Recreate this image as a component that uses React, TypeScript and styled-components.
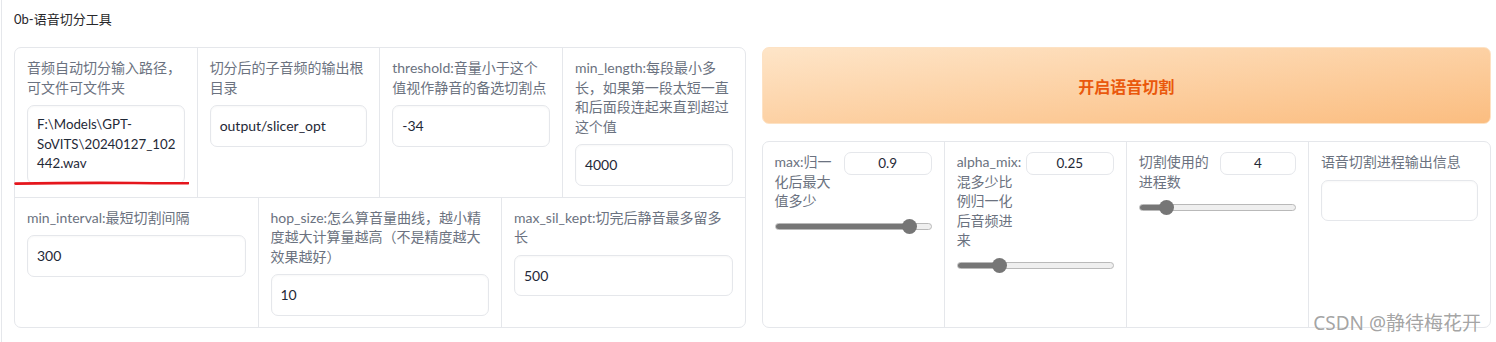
import React from "react";
import styled, { createGlobalStyle } from "styled-components";

const GlobalStyle = createGlobalStyle`
  html, body {
    margin: 0;
    padding: 0;
    background: #ffffff;
  }
  body {
    font-family: Lato, "Noto Sans CJK SC", "Noto Sans", sans-serif;
    color: #1f2937;
  }
`;

const LINE = "#e5e7eb";

// page frame
const Page = styled.div`
  position: relative;
  box-sizing: border-box;
  min-height: 100vh;
  margin-left: 1px;
  border-left: 1px solid ${LINE};
  padding: 9px 5px 0 12px;
`;

const Title = styled.div`
  font-size: 13px;
  line-height: 20px;
  color: #27272a;
`;

const Layout = styled.div`
  display: flex;
  align-items: stretch;
  gap: 16px;
  margin-top: 18px;
`;

// left block: two rows of fields
const Panel = styled.div`
  flex: 1 1 0;
  min-width: 0;
  display: flex;
  flex-direction: column;
  border: 1px solid ${LINE};
  border-radius: 7px;
  background: #fff;
`;

const Row = styled.div<{ divided?: boolean }>`
  display: flex;
  ${(p) => (p.divided ? `border-top: 1px solid ${LINE};` : "")}
`;

const Cell = styled.div`
  position: relative;
  flex: 1 1 0;
  min-width: 0;
  padding: 10px 12px 11px;

  & + & {
    border-left: 1px solid ${LINE};
  }
`;

const Label = styled.div`
  font-size: 14px;
  line-height: 19.5px;
  color: #6b7280;
  margin-bottom: 8px;
`;

const TextBox = styled.div<{ multiline?: boolean; empty?: boolean }>`
  box-sizing: border-box;
  border: 1px solid ${LINE};
  border-radius: 7px;
  background: #fff;
  box-shadow: inset 0 1px 2px rgba(0, 0, 0, 0.03);
  padding: ${(p) => (p.multiline ? "9px 4px 9px 9px" : "10px 9px")};
  font-size: ${(p) => (p.multiline ? "13.3px" : "14px")};
  line-height: 19.5px;
  color: #1f2937;
  overflow-wrap: anywhere;
  min-height: ${(p) => (p.empty ? "41px" : "auto")};
`;

const Annotation = styled.svg`
  position: absolute;
  left: -1px;
  top: 132px;
  width: 175px;
  height: 6px;
`;

// right block
const Side = styled.div`
  flex: 1 1 0;
  min-width: 0;
  display: flex;
  flex-direction: column;
  gap: 17px;
`;

const RunButton = styled.button`
  height: 77px;
  border: 1px solid #fde2c4;
  border-radius: 7px;
  background: linear-gradient(to bottom right, #fee5c8, #fbbd80);
  color: #ea580c;
  font-family: Lato, "Noto Sans CJK SC", sans-serif;
  font-size: 16px;
  font-weight: 700;
  cursor: pointer;
`;

const ParamPanel = styled.div`
  flex: 1;
  display: flex;
  border: 1px solid ${LINE};
  border-radius: 7px;
  background: #fff;
`;

const SliderHead = styled.div`
  display: flex;
  align-items: flex-start;
  gap: 6px;
`;

const HeadLabel = styled.div`
  flex: 1;
  min-width: 0;
  font-size: 14px;
  line-height: 19.5px;
  color: #6b7280;
`;

const NumberBox = styled.div<{ w: number }>`
  flex: 0 0 ${(p) => p.w}px;
  box-sizing: border-box;
  height: 23px;
  border: 1px solid ${LINE};
  border-radius: 7px;
  font-size: 13.5px;
  line-height: 21px;
  text-align: center;
  color: #1f2937;
`;

const Track = styled.div`
  position: relative;
  height: 15px;
  margin-top: 8.5px;
`;

const Rail = styled.div`
  position: absolute;
  left: 0;
  right: 0;
  top: 4px;
  height: 7px;
  box-sizing: border-box;
  border: 1px solid #b9b9b9;
  border-radius: 4px;
  background: #efefef;
  overflow: hidden;
`;

const Fill = styled.div`
  height: 100%;
  background: #767676;
`;

const Thumb = styled.div`
  position: absolute;
  top: 0;
  width: 15px;
  height: 15px;
  margin-left: -7.5px;
  border-radius: 50%;
  background: #767676;
`;

const Watermark = styled.div`
  position: absolute;
  right: 15px;
  bottom: 8px;
  font-family: "Noto Sans", "Noto Sans CJK SC", sans-serif;
  font-size: 19px;
  line-height: 22px;
  color: rgba(140, 140, 140, 0.8);
  text-shadow: 0 0 2px #fff;
  pointer-events: none;
`;

type SliderProps = {
  label: string;
  value: string;
  fraction: number;
  boxWidth: number;
};

const Slider: React.FC<SliderProps> = ({ label, value, fraction, boxWidth }) => {
  const pos = `calc(7.5px + ${fraction} * (100% - 15px))`;
  return (
    <Cell>
      <SliderHead>
        <HeadLabel>{label}</HeadLabel>
        <NumberBox w={boxWidth}>{value}</NumberBox>
      </SliderHead>
      <Track>
        <Rail>
          <Fill style={{ width: pos }} />
        </Rail>
        <Thumb style={{ left: pos }} />
      </Track>
    </Cell>
  );
};

type FieldProps = {
  label: string;
  value: string;
  multiline?: boolean;
  children?: React.ReactNode;
};

const Field: React.FC<FieldProps> = ({ label, value, multiline, children }) => (
  <Cell>
    <Label>{label}</Label>
    <TextBox multiline={multiline}>{value}</TextBox>
    {children}
  </Cell>
);

export default function App() {
  return (
    <>
      <GlobalStyle />
      <Page>
        <Title>0b-语音切分工具</Title>
        <Layout>
          <Panel>
            <Row>
              <Field
                label="音频自动切分输入路径，可文件可文件夹"
                value="F:\Models\GPT-SoVITS\20240127_102442.wav"
                multiline
              >
                <Annotation viewBox="0 0 175 6">
                  <path
                    d="M1.5 3.6 Q 60 2.6 120 3 T 173.5 3.2"
                    stroke="#e5161d"
                    strokeWidth="2.6"
                    strokeLinecap="round"
                    fill="none"
                  />
                </Annotation>
              </Field>
              <Field label="切分后的子音频的输出根目录" value="output/slicer_opt" />
              <Field label="threshold:音量小于这个值视作静音的备选切割点" value="-34" />
              <Field
                label="min_length:每段最小多长，如果第一段太短一直和后面段连起来直到超过这个值"
                value="4000"
              />
            </Row>
            <Row divided>
              <Field label="min_interval:最短切割间隔" value="300" />
              <Field
                label="hop_size:怎么算音量曲线，越小精度越大计算量越高（不是精度越大效果越好）"
                value="10"
              />
              <Field label="max_sil_kept:切完后静音最多留多长" value="500" />
            </Row>
          </Panel>
          <Side>
            <RunButton>开启语音切割</RunButton>
            <ParamPanel>
              <Slider label="max:归一化后最大值多少" value="0.9" fraction={0.9} boxWidth={88} />
              <Slider
                label="alpha_mix:混多少比例归一化后音频进来"
                value="0.25"
                fraction={0.25}
                boxWidth={88}
              />
              <Slider label="切割使用的进程数" value="4" fraction={0.145} boxWidth={76} />
              <Cell>
                <Label>语音切割进程输出信息</Label>
                <TextBox empty />
              </Cell>
            </ParamPanel>
          </Side>
        </Layout>
        <Watermark>CSDN @静待梅花开</Watermark>
      </Page>
    </>
  );
}
